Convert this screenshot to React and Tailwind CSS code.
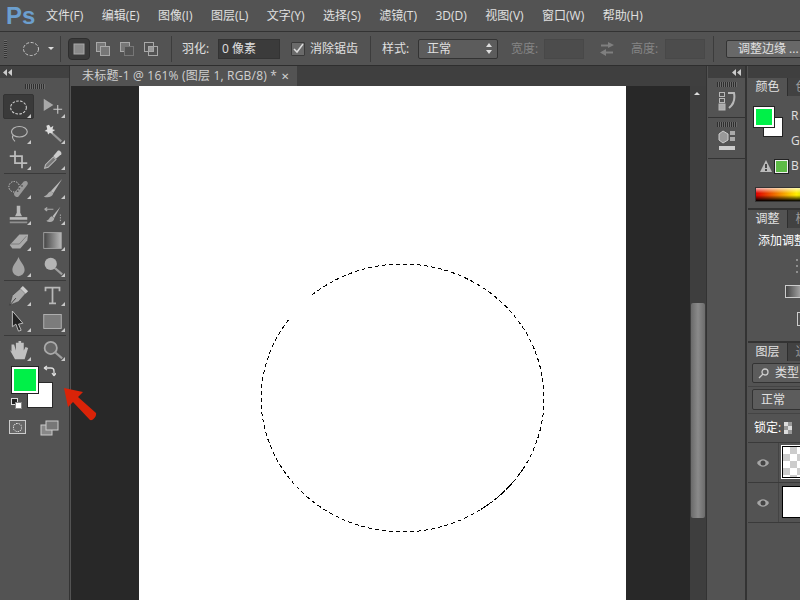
import React from "react";

const cjk = { fontFamily: '"Open Sans", "Noto Sans CJK SC", sans-serif' };

const menus = ["文件(F)", "编辑(E)", "图像(I)", "图层(L)", "文字(Y)", "选择(S)", "滤镜(T)", "3D(D)", "视图(V)", "窗口(W)", "帮助(H)"];

// little svg wrapper for the tool icons, drawn on a 24 grid
const Ico = ({ children, more = true }) => (
  <div className="relative w-[24px] h-[24px] flex items-center justify-center">
    <svg width="21" height="21" viewBox="0 0 24 24" fill="none">{children}</svg>
    {more && <div className="absolute right-[-1px] bottom-[1px] w-0 h-0 border-l-[4px] border-l-transparent border-b-[4px] border-b-[#c8c8c8]" />}
  </div>
);

const g = "#b8b8b8";

const tools = [
  [
    <ellipse cx="12" cy="12" rx="9" ry="7.5" stroke="#d0d0d0" strokeWidth="1.2" strokeDasharray="3 1.5" />,
    <g fill={g} stroke="none"><path d="M2 2l11 7-11 7z" fill="#a8a8a8" /><path d="M18 9v10M13 14h10" stroke="#ccc" strokeWidth="1.2" /></g>,
  ],
  [
    <g stroke={g} strokeWidth="1.3"><ellipse cx="13" cy="10" rx="9" ry="6" /><path d="M6 14c-2 2 0 5 2 7" /></g>,
    <g><path d="M8 2l2 3 3-2-1 4 3 1-3 2 1 3-4-2-2 2-1-3-3-1 3-2-1-4z" fill="#ddd" /><path d="M12 12l10 9" stroke="#999" strokeWidth="2.4" /></g>,
  ],
  [
    <g stroke="#bdbdbd" strokeWidth="2"><path d="M8 2v14h14" /><path d="M2 8h14v14" /></g>,
    <g><path d="M3 22l1-4 9-9 3 3-9 9z" stroke={g} strokeWidth="1.2" fill="#777" /><path d="M13 8l5-6c2-1 5 2 4 4l-6 5z" fill="#ccc" /></g>,
  ],
];

const tools2 = [
  [
    <g><circle cx="7" cy="10" r="6" stroke="#ddd" strokeDasharray="1.5 1.5" /><path d="M7 17L18 4c3-2 6 1 4 4L12 21c-2 2-6-1-5-4z" fill="#999" /><circle cx="13" cy="12" r="1" fill="#555" /><circle cx="16" cy="9" r="1" fill="#555" /><circle cx="11" cy="15" r="1" fill="#555" /></g>,
    <g><path d="M23 1L10 15l3 2z" fill="#bbb" /><path d="M10 15c-3 1-4 5-8 6 4 2 10 1 11-4z" fill="#aaa" /></g>,
  ],
  [
    <g fill="#b8b8b8"><path d="M10 2h4v8l2 4H8l2-4z" /><rect x="2" y="15" width="20" height="3" /><rect x="2" y="20" width="20" height="2" fill="#909090" /></g>,
    <g><path d="M21 3L12 14l2 2z" fill="#bbb" /><path d="M11 14c-3 1-2 4-6 5 3 3 9 2 9-3z" fill="#aaa" /><path d="M3 6h10M3 6l3-2M3 6l3 2" stroke="#aaa" strokeWidth="1.3" /><path d="M21 12v9" stroke="#bbb" strokeDasharray="1.5 1.5" /></g>,
  ],
  [
    <g><path d="M2 17L13 5h10l-1 7-8 9H5z" fill="#aaa" /><path d="M3 16h10l8-9" stroke="#777" /></g>,
    <g><defs><linearGradient id="gr" x1="0" x2="1"><stop stopColor="#444" /><stop offset="1" stopColor="#b8b8b8" /></linearGradient></defs><rect x="2" y="3" width="20" height="18" fill="url(#gr)" stroke="#aaa" /></g>,
  ],
  [
    <path d="M12 1c2 6 7 9 7 15a7 7 0 0 1-14 0c0-6 5-9 7-15z" fill="#a4a4a4" />,
    <g><circle cx="10" cy="9" r="7" fill="#b4b4b4" /><path d="M15 14l8 7" stroke="#a0a0a0" strokeWidth="2.5" /></g>,
  ],
];

const tools3 = [
  [
    <g><path d="M2 23l3-11 9-8 6 6-8 9z" fill="#aaa" stroke="#333" strokeWidth=".6" /><path d="M14 4l3-3 6 6-3 3z" fill="#ccc" /><path d="M2 23l7-8" stroke="#333" /></g>,
    <g stroke="#b8b8b8" strokeWidth="2"><path d="M4 7V3h16v4M12 3v18M8 21h8" /></g>,
  ],
  [
    <path d="M5 0v18l4-3 3 8 3-1-3-7 5-1z" fill="#222" stroke="#ccc" />,
    <rect x="2" y="4" width="20" height="16" fill="#7c7c7c" stroke="#b8b8b8" />,
  ],
];

const Tool = ({ children, more }) => (
  <div className="flex items-center justify-center h-[26px]"><Ico more={more}>{children}</Ico></div>
);

const ToolRows = ({ rows }) => (
  <div className="grid grid-cols-2 w-[68px] ml-[1px]">
    {rows.map((r, i) => (
      <React.Fragment key={i}>
        <Tool>{r[0]}</Tool>
        <Tool>{r[1]}</Tool>
      </React.Fragment>
    ))}
  </div>
);

const Sep = () => <div className="h-px w-[62px] ml-[4px] my-[1px] bg-[#3a3a3a]" />;
const VSep = ({ ml }) => <div className={`w-px h-[26px] shrink-0 bg-[#3c3c3c] ${ml}`} />;

const Grip = ({ w = "w-[20px]" }) => (
  <div className={`h-[5px] mx-auto ${w} bg-[repeating-linear-gradient(90deg,#2e2e2e_0_1px,#6a6a6a_1px_2px)]`} />
);

const ModeBtn = ({ active, kind }) => (
  <div className={`w-[22px] h-[22px] flex items-center justify-center rounded-sm ${active ? "bg-[#3a3a3a] border border-[#2e2e2e]" : ""}`}>
    <svg width="16" height="16" viewBox="0 0 16 16" fill="none" stroke="#a8a8a8">
      {kind === 0 && <rect x="3" y="3" width="10" height="10" fill="#8a8a8a" />}
      {kind === 1 && <><rect x="1.5" y="1.5" width="9" height="9" fill="#777" /><rect x="5.5" y="5.5" width="9" height="9" fill="#777" /></>}
      {kind === 2 && <><rect x="1.5" y="1.5" width="9" height="9" fill="#777" /><rect x="5.5" y="5.5" width="9" height="9" fill="#535353" stroke="#777" /></>}
      {kind === 3 && <><rect x="1.5" y="1.5" width="9" height="9" /><rect x="5.5" y="5.5" width="9" height="9" /><rect x="5.5" y="5.5" width="5" height="5" fill="#999" /></>}
    </svg>
  </div>
);

const Tab = ({ label, cls = "bg-[#535353] text-[#e2e2e2]" }) => (
  <div className={`h-[18px] w-[40px] shrink-0 flex items-center justify-center text-[12px] border-r border-[#2e2e2e] ${cls}`}>{label}</div>
);

const Eye = () => (
  <svg width="14" height="10" viewBox="0 0 14 10">
    <path d="M1 5c3-5 9-5 12 0-3 5-9 5-12 0z" fill="#a6a6a6" />
    <circle cx="7" cy="5" r="2.5" fill="#444" />
  </svg>
);

const LayerRow = ({ checker }) => (
  <div className="flex h-[40px] border-b border-[#3a3a3a]">
    <div className="w-[31px] shrink-0 flex items-center justify-center border-r border-[#444]"><Eye /></div>
    <div className="pl-[3px] pt-[3px] shrink-0">
      <div className={`w-[32px] h-[32px] border border-black outline-1 ${checker ? "outline-white bg-[conic-gradient(#ccc_25%,#fff_0_50%,#ccc_0_75%,#fff_0)] bg-[length:14px_14px]" : "outline-transparent bg-white"}`} />
    </div>
  </div>
);

export default function App() {
  return (
    <div className="w-[800px] h-[600px] overflow-hidden bg-[#535353] flex flex-col text-[12px] text-[#e0e0e0]" style={cjk}>
      {/* menu bar */}
      <div className="h-[32px] shrink-0 flex items-center border-b border-[#333] bg-[#535353]">
        <div className="w-[46px] pl-[6px] text-[24px] font-bold text-[#6c9fce] leading-none" style={{ fontFamily: '"Liberation Sans", sans-serif' }}>Ps</div>
        <div className="flex gap-[18.5px] whitespace-nowrap">
          {menus.map((m) => <span key={m}>{m}</span>)}
        </div>
      </div>

      {/* options bar */}
      <div className="h-[34px] shrink-0 flex items-center border-b border-[#2e2e2e] whitespace-nowrap">
        <div className="ml-[4px] w-[3px] h-[18px] shrink-0 bg-[repeating-linear-gradient(0deg,#333_0_1px,#6a6a6a_1px_2px)]" />
        <svg className="ml-[15px] shrink-0" width="18" height="16" viewBox="0 0 18 16" fill="none">
          <ellipse cx="9" cy="8" rx="7.5" ry="6.5" stroke="#c8c8c8" strokeDasharray="3 1.6" />
        </svg>
        <div className="ml-[8px] w-0 h-0 shrink-0 border-x-[3px] border-x-transparent border-t-[3px] border-t-[#ddd]" />
        <VSep ml="ml-[6px]" />
        <div className="ml-[7px] flex gap-[2px] shrink-0">
          <ModeBtn active kind={0} />
          <ModeBtn kind={1} />
          <ModeBtn kind={2} />
          <ModeBtn kind={3} />
        </div>
        <VSep ml="ml-[9px]" />
        <span className="ml-[10px] w-[27px] shrink-0">羽化:</span>
        <div className="ml-[9px] w-[62px] h-[20px] shrink-0 bg-[#3b3b3b] border border-[#333] pl-[3px] flex items-center">0 像素</div>
        <div className="ml-[11px] w-[14px] h-[14px] shrink-0 bg-[#6a6a6a] border border-[#3a3a3a] flex items-center justify-center rounded-[1px]">
          <svg width="12" height="12" viewBox="0 0 12 12" fill="none"><path d="M2 6l3 3 6-8" stroke="#ddd" strokeWidth="1.5" /></svg>
        </div>
        <span className="ml-[5px] w-[48px] shrink-0">消除锯齿</span>
        <VSep ml="ml-[12px]" />
        <span className="ml-[11px] w-[27px] shrink-0">样式:</span>
        <div className="ml-[9px] w-[80px] h-[20px] shrink-0 rounded-[2px] border border-[#333] bg-[#5c5c5c] flex items-center justify-between pl-[8px] pr-[5px]">
          <span>正常</span>
          <svg width="6" height="11" viewBox="0 0 6 11" fill="#ddd"><path d="M3 0l3 4H0zM3 11L0 7h6z" /></svg>
        </div>
        <span className="ml-[13px] w-[27px] shrink-0 text-[#858585]">宽度:</span>
        <div className="ml-[6px] w-[40px] h-[20px] shrink-0 bg-[#4c4c4c] border border-[#484848]" />
        <svg className="ml-[15px] shrink-0" width="16" height="14" viewBox="0 0 16 14" fill="#7f7f7f"><path d="M2 2.5h7V0l6 3-6 3V4.5H2zM14 9.5H7V7l-6 3.5L7 14v-2.5h7z" /></svg>
        <span className="ml-[16px] w-[28px] shrink-0 text-[#858585]">高度:</span>
        <div className="ml-[6px] w-[40px] h-[20px] shrink-0 bg-[#4c4c4c] border border-[#484848]" />
        <VSep ml="ml-[8px]" />
        <div className="ml-[12px] shrink-0 w-[90px] h-[18px] rounded-[2px] border border-[#333] bg-[#686868] pl-[11px] flex items-center">调整边缘 ...</div>
      </div>

      <div className="flex flex-1 min-h-0">
        {/* left tools */}
        <div className="w-[70px] shrink-0 border-r border-[#333] flex flex-col">
          <div className="h-[12px] bg-[#414141] flex items-center pl-[3px]">
            <svg width="9" height="7" viewBox="0 0 9 7" fill="#ccc"><path d="M4 0v7L0 3.5zM9 0v7L5 3.5z" /></svg>
          </div>
          <div className="h-[16px] flex items-center"><Grip /></div>
          <div className="relative">
            <div className="absolute left-[3px] top-0 w-[31px] h-[25px] bg-[#3a3a3a] border border-[#333] rounded-[2px]" />
            <div className="relative"><ToolRows rows={tools} /></div>
          </div>
          <Sep />
          <ToolRows rows={tools2} />
          <Sep />
          <ToolRows rows={tools3} />
          <Sep />
          <ToolRows rows={[[
            <path d="M2 11l6 11h11l4-13-3-1-2 4V3h-3v8V1h-3v10V3H9v9L7 5H4v8z" fill="#c0c0c0" />,
            <g><circle cx="10" cy="9" r="7" fill="#666" stroke="#aaa" strokeWidth="2" /><path d="M15 14l8 7" stroke="#a0a0a0" strokeWidth="2.5" /></g>,
          ]]} />
          {/* colour swatches */}
          <div className="relative h-[50px] mt-[1px]">
            <div className="absolute left-[27px] top-[18px] w-[26px] h-[26px] bg-white border border-[#2a2a2a]" />
            <div className="absolute left-[12px] top-[3px] w-[26px] h-[26px] bg-[#00f048] border-2 border-white outline-1 outline-[#222]" />
            <svg className="absolute left-[43px] top-[1px]" width="13" height="13" viewBox="0 0 13 13" fill="none" stroke="#ddd" strokeWidth="1.3">
              <path d="M1 3h7c2 0 3 1 3 3v5M1 3l3-2M1 3l3 2M11 11l-2-3M11 11l2-3" />
            </svg>
            <div className="absolute left-[11px] top-[34px] w-[7px] h-[7px] bg-[#222] border border-[#ddd]" />
            <div className="absolute left-[15px] top-[38px] w-[7px] h-[7px] bg-white border border-[#888]" />
          </div>
          <div className="flex justify-between pl-[9px] pr-[9px] mt-[6px]">
            <div className="w-[17px] h-[14px] border border-[#ccc] bg-[#666] flex items-center justify-center">
              <div className="w-[9px] h-[9px] rounded-full border border-dotted border-white" />
            </div>
            <svg width="20" height="16" viewBox="0 0 20 16" fill="#888" stroke="#ccc">
              <rect x="1" y="5" width="11" height="10" />
              <rect x="6" y="1" width="12" height="9" fill="#777" />
            </svg>
          </div>
        </div>

        {/* document area */}
        <div className="w-[636px] shrink-0 flex flex-col ml-[1px] border-r border-[#333]">
          <div className="h-[20px] shrink-0 bg-[#3f3f3f] flex">
            <div className="w-[226px] bg-[#535353] flex items-center justify-between pl-[11px] pr-[8px] text-[#d0d0d0] whitespace-nowrap tracking-[0.2px]">
              <span>未标题-1 @ 161% (图层 1, RGB/8) *</span>
              <span className="text-[10px] leading-none">✕</span>
            </div>
          </div>
          <div className="flex-1 flex bg-[#282828] min-h-0">
            <div className="w-[619px] shrink-0 pl-[68px]">
              <div className="w-[487px] h-full bg-white">
                <svg width="487" height="514" viewBox="139 86 487 514" fill="none" stroke="#000" strokeWidth="1" shapeRendering="crispEdges">
                  <path d="M312 295A141.5 134 0 0 1 544 398A141.5 134 0 0 1 525 466" strokeDasharray="4 3" />
                  <path d="M525 466A141.5 134 0 0 1 480 510" strokeDasharray="14 2" />
                  <path d="M480 510A141.5 134 0 0 1 261 398A141.5 134 0 0 1 290 318" strokeDasharray="4 3" />
                </svg>
              </div>
            </div>
            <div className="flex-1 bg-[#3e3e3e] relative">
              <div className="absolute left-[4px] top-[6px] w-0 h-0 border-x-[3px] border-x-transparent border-b-[3px] border-b-[#ddd]" />
              <div className="absolute left-[1px] right-[1px] top-[217px] h-[215px] rounded-[2px] bg-[linear-gradient(90deg,#6a6a6a,#8a8a8a_50%,#6c6c6c)]" />
            </div>
          </div>
        </div>

        {/* collapsed icon dock */}
        <div className="w-[39px] shrink-0 ml-[1px] border-r-2 border-[#333] flex flex-col">
          <div className="h-[12px] bg-[#3f3f3f] flex items-center justify-end pr-[4px]">
            <svg width="9" height="7" viewBox="0 0 9 7" fill="#ccc"><path d="M4 0v7L0 3.5zM9 0v7L5 3.5z" /></svg>
          </div>
          <div className="h-[40px] border-b border-[#333] pt-[4px]">
            <Grip />
            <svg className="mx-auto mt-[4px]" width="18" height="20" viewBox="0 0 18 20" fill="none" stroke="#b8b8b8">
              <rect x="1.5" y="1.5" width="5" height="4" /><rect x="1.5" y="7.5" width="5" height="4" /><rect x="1" y="13" width="6" height="6" fill="#aaa" />
              <path d="M10 2h6c1 5 0 11-5 15" strokeWidth="2" />
            </svg>
          </div>
          <div className="h-[41px] border-b border-[#333] pt-[4px]">
            <Grip />
            <svg className="mx-auto mt-[3px]" width="18" height="22" viewBox="0 0 18 22" fill="#aaa">
              <path d="M1 4l4-3 5 3v6l-5 3-4-3z" fill="#999" stroke="#ccc" />
              <rect x="12" y="1" width="5" height="4" /><rect x="12" y="7" width="5" height="4" />
              <rect x="1" y="16" width="16" height="4" fill="#ccc" />
            </svg>
          </div>
        </div>

        {/* right panels */}
        <div className="flex-1 min-w-0 overflow-hidden ml-[1px] flex flex-col whitespace-nowrap">
          <div className="h-[12px] bg-[#3f3f3f] shrink-0" />
          {/* color */}
          <div className="h-[132px] shrink-0 border-b-2 border-[#333] flex flex-col">
            <div className="flex bg-[#414141] overflow-hidden"><Tab label="颜色" /><Tab label="色板" cls="bg-[#424242] text-[#999]" /></div>
            <div className="relative flex-1">
              <div className="absolute left-[15px] top-[21px] w-[20px] h-[20px] bg-white border border-[#222]" />
              <div className="absolute left-[6px] top-[11px] w-[20px] h-[20px] bg-[#00f048] border-2 border-white outline-1 outline-[#222]" />
              <span className="absolute left-[43px] top-[11px]">R</span>
              <span className="absolute left-[43px] top-[36px]">G</span>
              <span className="absolute left-[43px] top-[61px]">B</span>
              <svg className="absolute left-[12px] top-[64px]" width="12" height="12" viewBox="0 0 12 12"><path d="M6 0l6 12H0z" fill="#bbb" /><path d="M6 4v4M6 9v2" stroke="#222" strokeWidth="1.5" /></svg>
              <div className="absolute left-[27px] top-[64px] w-[13px] h-[13px] bg-[#5dbb46] border border-[#eee] outline-1 outline-[#222]" />
              <div className="absolute left-[7px] top-[91px] w-[60px] h-[15px] border border-[#333] bg-[linear-gradient(#ffffffb0,#ffffff00_40%,#00000000_55%,#000000),linear-gradient(90deg,#e00000,#ffee00_70%,#99cc00)]" />
            </div>
          </div>
          {/* adjustments */}
          <div className="h-[133px] shrink-0 border-b-2 border-[#333] flex flex-col">
            <div className="flex bg-[#414141] overflow-hidden"><Tab label="调整" /><Tab label="样式" cls="bg-[#424242] text-[#999]" /></div>
            <div className="pl-[10px] pt-[4px] text-white text-[12px]">添加调整</div>
            <div className="relative flex-1">
              <svg className="absolute left-[48px] top-[8px]" width="10" height="16" viewBox="0 0 10 16" stroke="#ccc" strokeDasharray="2 2"><path d="M0 2h10M0 8h10M0 14h10" /></svg>
              <div className="absolute left-[37px] top-[35px] w-[20px] h-[13px] border border-[#ccc] bg-[linear-gradient(90deg,#444,#bbb)]" />
              <div className="absolute left-[49px] top-[62px] w-[8px] h-[14px] border border-[#ccc]" />
            </div>
          </div>
          {/* layers */}
          <div className="flex-1 flex flex-col">
            <div className="flex bg-[#414141] overflow-hidden"><Tab label="图层" /><Tab label="通道" cls="bg-[#424242] text-[#999]" /></div>
            <div className="h-[24px] flex items-center pl-[4px]">
              <div className="w-[60px] shrink-0 h-[20px] rounded-[2px] border border-[#333] bg-[#5c5c5c] pl-[5px] flex items-center gap-[6px]">
                <svg width="11" height="11" viewBox="0 0 11 11" fill="none" stroke="#ccc" strokeWidth="1.3"><circle cx="7" cy="4" r="3" /><path d="M5 6l-4 4" /></svg>
                类型
              </div>
            </div>
            <div className="h-[27px] flex items-start pl-[4px] border-t border-[#444] mt-[1px] pt-[2px]">
              <div className="w-[60px] shrink-0 h-[21px] rounded-[2px] border border-[#333] bg-[#5c5c5c] pl-[8px] flex items-center">正常</div>
            </div>
            <div className="h-[30px] flex items-center pl-[6px] gap-[2px] border-t border-[#444] border-b border-b-[#3a3a3a] text-white">
              锁定:
              <div className="w-[8px] h-[12px] ml-[1px] bg-[conic-gradient(#999_25%,#ddd_0_50%,#999_0_75%,#ddd_0)] bg-[length:8px_8px]" />
            </div>
            <LayerRow checker />
            <LayerRow />
          </div>
        </div>
      </div>

      {/* red arrow annotation */}
      <svg className="absolute left-[60px] top-[385px]" width="40" height="40" viewBox="0 0 40 40">
        <path d="M4 3l19 4-5 5 18 16c1 3-3 8-6 7L13 17l-5 5z" fill="#da2308" />
      </svg>
    </div>
  );
}
